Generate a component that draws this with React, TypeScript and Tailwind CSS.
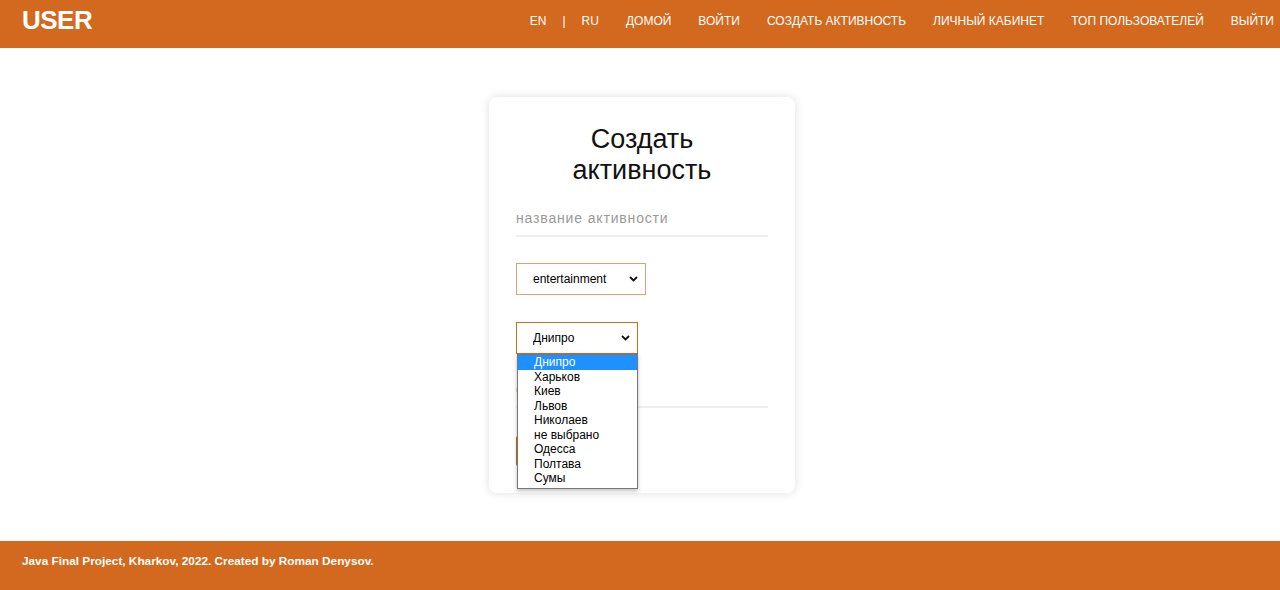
import { useState } from "react";

const navLinks = ["ДОМОЙ", "ВОЙТИ", "СОЗДАТЬ АКТИВНОСТЬ", "ЛИЧНЫЙ КАБИНЕТ", "ТОП ПОЛЬЗОВАТЕЛЕЙ", "ВЫЙТИ"];
const cities = ["Днипро", "Харьков", "Киев", "Львов", "Николаев", "не выбрано", "Одесса", "Полтава", "Сумы"];

function Chevron() {
  return (
    <svg width="9" height="6" viewBox="0 0 9 6" className="pointer-events-none absolute right-[8px] top-1/2 -translate-y-1/2">
      <path d="M1 1l3.5 3.5L8 1" fill="none" stroke="#111" strokeWidth="1.8" />
    </svg>
  );
}

export default function App() {
  const [city] = useState("Днипро");

  return (
    <div className="flex min-h-[590px] flex-col bg-white font-['Liberation_Sans',Arial,sans-serif]">
      <header className="flex h-[48px] items-center justify-between bg-[#d2691e] pb-[7px] pl-[22px] pr-[6px] text-white">
        <span className="text-[26px] font-bold tracking-[-0.5px]">USER</span>
        <nav className="flex items-center text-[12px]">
          <span>EN</span>
          <span className="mx-[16px]">|</span>
          <span>RU</span>
          {navLinks.map((l) => (
            <span key={l} className="ml-[27px]">{l}</span>
          ))}
        </nav>
      </header>

      <main className="flex flex-1 justify-center pt-[49px] pb-[40px] pl-[4px]">
        <div className="w-[306px] self-start rounded-[8px] bg-white px-[27px] pt-[27px] pb-[27px] shadow-[0_0_10px_rgba(0,0,0,0.13)]">
          <h1 className="mx-auto w-[180px] text-center text-[27px] leading-[31px] text-[#111]">Создать активность</h1>

          <div className="mt-[15px] border-b-2 border-[#eeeeee]">
            <input
              className="h-[34px] w-full text-[14px] tracking-[0.06em] outline-none placeholder:text-[#999]"
              placeholder="название активности"
            />
          </div>

          <div className="relative mt-[26px] w-[130px]">
            <select className="h-[32px] w-full appearance-none border border-[#dca27c] bg-white pl-[16px] text-[12px] text-black outline-none">
              <option>entertainment</option>
            </select>
            <Chevron />
          </div>

          <div className="relative mt-[27px] w-[122px]">
            <select value={city} onChange={() => {}} className="h-[32px] w-full appearance-none border border-[#d2691e] bg-white pl-[16px] text-[12px] text-black outline-none">
              {cities.map((c) => (
                <option key={c}>{c}</option>
              ))}
            </select>
            <Chevron />
            <ul className="absolute left-[1px] top-[32px] z-10 w-[121px] border border-[#767676] bg-white pb-[2px] text-[12px] leading-[14.5px] text-black shadow-[0_2px_4px_rgba(0,0,0,0.25)]">
              {cities.map((c) => (
                <li key={c} className={c === city ? "bg-[#1e90ff] pl-[16px] text-white" : "pl-[16px]"}>
                  {c}
                </li>
              ))}
            </ul>
          </div>

          <div className="mt-[18px] border-b-2 border-[#eeeeee]">
            <input
              className="h-[34px] w-full text-[14px] tracking-[0.06em] outline-none placeholder:text-[#999]"
              placeholder="описание"
            />
          </div>

          <button className="mt-[28px] h-[30px] w-[100px] rounded-[2px] bg-[#d2691e] text-[13px] text-white">
            Создать
          </button>
        </div>
      </main>

      <footer className="flex h-[49px] items-start bg-[#d2691e] px-[22px] pt-[12px] text-[11.8px] font-bold text-white">
        Java Final Project, Kharkov, 2022. Created by Roman Denysov.
      </footer>
    </div>
  );
}
